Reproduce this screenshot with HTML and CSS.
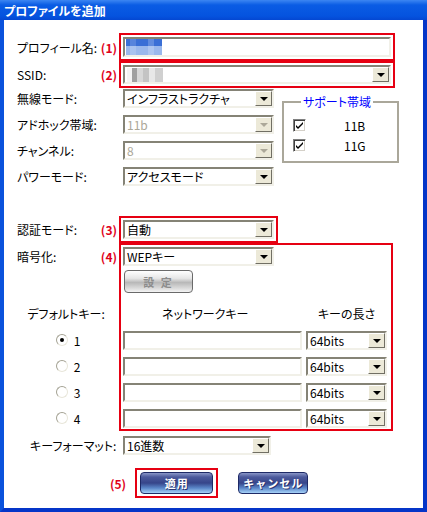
FILE: index.html
```html
<!DOCTYPE html>
<html lang="ja">
<head>
  <meta charset="UTF-8">
  <title>プロファイルを追加</title>
  <link rel="stylesheet" href="styles.css">
</head>
<body>
  <div class="window">
    <div class="titlebar">プロファイルを追加</div>
    <div class="frame">

      <div class="row r-name">
        <div class="lbl"><span>プロフィール名:</span><span class="mark">(1)</span></div>
        <div class="box red">
          <div class="input wide"><span class="mosaic blue"></span></div>
        </div>
      </div>

      <div class="row">
        <div class="lbl"><span>SSID:</span><span class="mark">(2)</span></div>
        <div class="box red">
          <div class="select wide"><span class="mosaic gray"></span><span class="arrow"></span></div>
        </div>
      </div>

      <div class="top">
        <div class="modes">
          <div class="row mode">
            <div class="lbl"><span>無線モード:</span></div>
            <div class="select mid plain">インフラストラクチャ<span class="arrow"></span></div>
          </div>
          <div class="row mode">
            <div class="lbl"><span>アドホック帯域:</span></div>
            <div class="select mid plain off">11b<span class="arrow"></span></div>
          </div>
          <div class="row mode">
            <div class="lbl"><span>チャンネル:</span></div>
            <div class="select mid plain off">8<span class="arrow"></span></div>
          </div>
          <div class="row mode">
            <div class="lbl"><span>パワーモード:</span></div>
            <div class="select mid plain">アクセスモード<span class="arrow"></span></div>
          </div>
        </div>

        <fieldset class="bands">
          <legend>サポート帯域</legend>
          <div class="band"><span class="chk"><svg width="9" height="9" viewBox="0 0 9 9"><path d="M1 4v2l2 2 5-5V1L3 6z" fill="#000"/></svg></span><span class="band-name">11B</span></div>
          <div class="band"><span class="chk"><svg width="9" height="9" viewBox="0 0 9 9"><path d="M1 4v2l2 2 5-5V1L3 6z" fill="#000"/></svg></span><span class="band-name">11G</span></div>
        </fieldset>
      </div>

      <div class="row r-auth">
        <div class="lbl"><span>認証モード:</span><span class="mark">(3)</span></div>
        <div class="box red">
          <div class="select mid">自動<span class="arrow"></span></div>
        </div>
      </div>

      <div class="wep">
        <div class="wep-left">
          <div class="lbl l-enc"><span>暗号化:</span><span class="mark">(4)</span></div>
          <div class="l-gap"></div>
          <div class="l-head">デフォルトキー:</div>
          <div class="l-radio"><span class="radio on"></span>1</div>
          <div class="l-radio"><span class="radio"></span>2</div>
          <div class="l-radio"><span class="radio"></span>3</div>
          <div class="l-radio"><span class="radio"></span>4</div>
        </div>

        <div class="box red wep-box">
          <div class="w-sel"><div class="select mid">WEPキー<span class="arrow"></span></div></div>
          <div class="w-btn"><button class="gray-btn">設 定</button></div>
          <div class="w-head"><span class="h-net">ネットワークキー</span><span class="h-len">キーの長さ</span></div>
          <div class="key"><div class="input key-in"></div><div class="select len">64bits<span class="arrow"></span></div></div>
          <div class="key"><div class="input key-in"></div><div class="select len">64bits<span class="arrow"></span></div></div>
          <div class="key"><div class="input key-in"></div><div class="select len">64bits<span class="arrow"></span></div></div>
          <div class="key"><div class="input key-in"></div><div class="select len">64bits<span class="arrow"></span></div></div>
        </div>
      </div>

      <div class="row r-format">
        <div class="lbl"><span>キーフォーマット:</span></div>
        <div class="select fmt plain">16進数<span class="arrow"></span></div>
      </div>

      <div class="actions">
        <span class="mark">(5)</span>
        <div class="box red apply-box"><button class="blue-btn">適用</button></div>
        <button class="blue-btn cancel">キャンセル</button>
      </div>

    </div>
  </div>
</body>
</html>
```

FILE: styles.css
```css
body { margin: 0; font: 12px "Noto Sans CJK JP", "Liberation Sans", sans-serif; font-feature-settings: "palt" 1; color: #000; }
.window { width: 427px; height: 512px; display: flex; flex-direction: column; background: #fff; }
.titlebar { height: 20px; box-sizing: border-box; padding: 3px 0 0 4px; background: linear-gradient(#3c86f2, #0a5ce4 25%, #0553df 80%, #0447d2); color: #fff; font-weight: bold; font-size: 12px; line-height: 16px; }
.frame { flex: 1; border: 4px solid #0a52dc; border-top: 0; border-right-color: #0535c8; border-bottom-color: #0535c8; padding-left: 13px; }

.row { display: flex; align-items: center; }
.lbl { width: 102px; display: flex; justify-content: space-between; align-items: center; flex: none; white-space: nowrap; }
.mark { color: #e0001a; font-weight: bold; padding-right: 2px; }

.box { border: 2px solid transparent; padding: 2px; }
.box.red { border-color: #e60012; }

.input { box-sizing: border-box; height: 20px; border: 2px solid; border-color: #858376 #f1f0e8 #f1f0e8 #858376; background: #fff; display: flex; align-items: center; padding-left: 1px; }
.select { box-sizing: border-box; height: 19px; border: 2px solid; border-color: #858376 #f1f0e8 #f1f0e8 #858376; background: #fff; display: flex; align-items: center; padding-left: 2px; white-space: nowrap; }
.select.off { color: #aca899; }
.arrow { margin-left: auto; width: 17px; height: 15px; box-sizing: border-box; background: #ece9d8; border: 1px solid; border-color: #fff #716f64 #716f64 #fff; display: flex; align-items: center; justify-content: center; flex: none; }
.arrow::after { content: ""; border-left: 4px solid transparent; border-right: 4px solid transparent; border-top: 4px solid #000; }
.off .arrow::after { border-top-color: #aca899; }

.wide { width: 268px; }
.mid { width: 151px; }
.plain { margin-left: 4px; }

.mosaic { display: block; width: 36px; height: 16px; }
.mosaic.blue { background: linear-gradient(90deg, transparent 0 4px, rgba(255,255,255,.15) 4px 10px, transparent 10px 22px, rgba(255,255,255,.2) 22px 28px, transparent 28px), linear-gradient(#3a6fd6 0 45%, #9ab8ec 45%); }
.mosaic.gray { background: linear-gradient(90deg, #f4f4f4 0 5px, #a0a0a0 5px 10px, #d8d8d8 10px 16px, #c4c4c4 16px 22px, #e8e8e8 22px 28px, #d0d0d0 28px); height: 14px; }

.r-name { margin-top: 13px; }
.top { display: flex; align-items: flex-start; }
.mode { height: 26px; align-items: flex-start; }
.mode .lbl { height: 19px; margin-top: 1px; }
.mode .select { margin-top: 1px; }

.bands { margin: 7px 0 0 8px; width: 117px; box-sizing: border-box; border: 2px solid #aaa79a; padding: 6px 0 6px 9px; }
.bands legend { color: #0000ff; padding: 0 2px; margin-left: 8px; line-height: 14px; }
.band { display: flex; align-items: center; height: 20px; }
.chk { width: 13px; height: 13px; box-sizing: border-box; border: 1px solid; border-color: #808080 #fff #fff #808080; box-shadow: inset 1px 1px #404040, inset -1px -1px #d4d0c8; background: #fff; display: flex; align-items: center; justify-content: center; }
.band-name { margin-left: 38px; }

.r-auth { margin-top: 24px; }

.wep { display: flex; }
.wep-left { width: 102px; }
.l-enc { height: 26px; }
.l-gap { height: 30px; }
.l-head { height: 28px; display: flex; align-items: center; justify-content: center; padding-right: 4px; }
.l-radio { height: 26px; display: flex; align-items: center; justify-content: center; gap: 6px; }
.radio { width: 12px; height: 12px; box-sizing: border-box; border-radius: 50%; border: 1px solid; border-color: #a4a294 #e8e6da #e8e6da #a4a294; background: #fff; display: flex; align-items: center; justify-content: center; }
.radio.on::after { content: ""; width: 4px; height: 4px; border-radius: 50%; background: #000; }

.wep-box { width: 274px; box-sizing: border-box; padding-bottom: 0; }
.w-sel { height: 22px; }
.w-btn { height: 30px; }
.gray-btn { margin: 1px 0 0 1px; width: 69px; height: 23px; border: 1px solid #6a6a6a; border-radius: 4px; background: linear-gradient(#ffffff, #e6e6e6 35%, #b8b8b8 55%, #d8d8d8 80%, #f4f4f4); color: #8c8c8c; font: bold 11px "Noto Sans CJK JP", sans-serif; letter-spacing: 2px; padding: 0; }
.w-head { height: 28px; display: grid; grid-template-columns: 179px 81px; gap: 4px; align-items: center; white-space: nowrap; }
.h-net { padding-left: 39px; }
.h-len { text-align: center; }
.key { height: 26px; display: flex; gap: 4px; align-items: flex-start; padding-top: 4px; box-sizing: border-box; }
.key:last-child { height: 23px; }
.key-in { width: 179px; height: 19px; }
.len { width: 81px; }

.r-format { margin-top: 5px; }
.r-format .lbl { padding-left: 13px; box-sizing: border-box; }
.fmt { width: 148px; }

.actions { display: flex; align-items: center; margin: 13px 0 0 93px; }
.actions .mark { margin-right: 7px; }
.apply-box { padding: 2px 3px; }
.blue-btn { width: 73px; height: 22px; padding: 0; border: 1px solid #1e2a66; border-radius: 4px; background: linear-gradient(#8a96c8, #4c5a9c 20%, #36458a 50%, #5a86c8 75%, #a6d2f8); color: #fff; font: bold 11px "Noto Sans CJK JP", sans-serif; text-shadow: 1px 1px 0 #2a3470; letter-spacing: 1px; }
.cancel { width: 70px; margin-left: 20px; }
```
